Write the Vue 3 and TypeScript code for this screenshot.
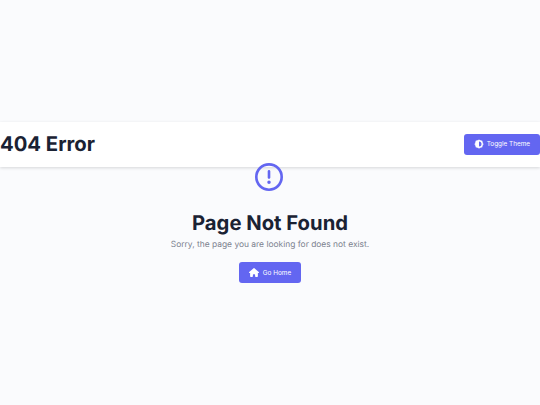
<script setup lang="ts">
  const title = '404 Error';
</script>

<template>
  <div class="page">
    <header class="header">
      <h1 class="brand">{{ title }}</h1>
      <button class="btn" type="button">
        <svg class="btn-icon" viewBox="0 0 24 24" width="10" height="10" aria-hidden="true">
          <circle cx="12" cy="12" r="9.500" fill="currentColor" />
          <g fill="currentColor">
            <circle cx="12" cy="2.500" r="1.500" />
            <circle cx="12" cy="21.500" r="1.500" />
            <circle cx="2.500" cy="12" r="1.500" />
            <circle cx="21.500" cy="12" r="1.500" />
            <circle cx="5.300" cy="5.300" r="1.500" />
            <circle cx="18.700" cy="5.300" r="1.500" />
            <circle cx="5.300" cy="18.700" r="1.500" />
            <circle cx="18.700" cy="18.700" r="1.500" />
          </g>
          <path fill="#6366f1" d="M12 6a6 6 0 0 1 0 12z" />
        </svg>
        Toggle Theme
      </button>
    </header>

    <main class="content">
      <svg class="alert" viewBox="0 0 512 512" width="28" height="28" aria-hidden="true">
        <path
          fill="currentColor"
          d="M256 48a208 208 0 1 1 0 416 208 208 0 1 1 0-416zm0 464A256 256 0 1 0 256 0a256 256 0 1 0 0 512zm0-384c-13.300 0-24 10.700-24 24V264c0 13.300 10.700 24 24 24s24-10.700 24-24V152c0-13.300-10.700-24-24-24zm32 224a32 32 0 1 0-64 0 32 32 0 1 0 64 0z"
        />
      </svg>
      <h2 class="heading">Page Not Found</h2>
      <p class="message">Sorry, the page you are looking for does not exist.</p>
      <button class="btn" type="button">
        <svg class="btn-icon" viewBox="0 0 576 512" width="10" height="9" aria-hidden="true">
          <path
            fill="currentColor"
            d="M575.800 255.500c0 18-15 32.100-32 32.100h-32l.7 160.200c0 2.700-.2 5.400-.5 8.100V472c0 22.100-17.900 40-40 40H456c-1.100 0-2.200 0-3.300-.1-1.400 .1-2.800 .1-4.200 .1H416 392c-22.100 0-40-17.900-40-40V448 384c0-17.700-14.300-32-32-32H256c-17.700 0-32 14.300-32 32v64 24c0 22.100-17.900 40-40 40H160 128.100c-1.500 0-3-.1-4.500-.2-1.200 .1-2.400 .2-3.600 .2H104c-22.100 0-40-17.900-40-40V360c0-.9 0-1.900 .1-2.800V287.600H32c-18 0-32-14-32-32.100 0-9 3-17 10-24L266.400 8c7-7 15-8 22-8s15 2 21 7L564.800 231.500c8 7 12 15 11 24z"
          />
        </svg>
        Go Home
      </button>
    </main>
  </div>
</template>

<style scoped>
  .page {
    min-height: 405px;
    display: flex;
    flex-direction: column;
    justify-content: center;
    background: #fafbfd;
    font-family: Inter, "Liberation Sans", sans-serif;
    color: #1a2233;
    text-rendering: geometricPrecision;
  }

  .header {
    display: flex;
    align-items: center;
    justify-content: space-between;
    height: 45px;
    background: #ffffff;
    box-shadow: 0 1px 3px rgba(0, 0, 0, 0.15);
  }

  .brand {
    margin: 0;
    font-size: 20.250px;
    font-weight: 700;
    line-height: 1;
  }

  .btn {
    display: inline-flex;
    align-items: center;
    gap: 3px;
    padding: 0 10px;
    height: 21px;
    border: 0;
    border-radius: 3px;
    background: #6366f1;
    color: #ffffff;
    font-family: inherit;
    font-size: 6.400px;
    font-weight: 400;
  }

  .content {
    display: flex;
    flex-direction: column;
    align-items: center;
  }

  .alert {
    margin: -4px 3px 0 0;
    color: #6366f1;
  }

  .heading {
    margin: 22px 0 0;
    font-size: 20.250px;
    font-weight: 700;
    line-height: 1;
  }

  .message {
    margin: 4.600px 0 0;
    font-size: 8.440px;
    line-height: 14px;
    color: #7b818e;
  }

  .message + .btn {
    margin-top: 10.400px;
    gap: 4px;
  }
</style>
